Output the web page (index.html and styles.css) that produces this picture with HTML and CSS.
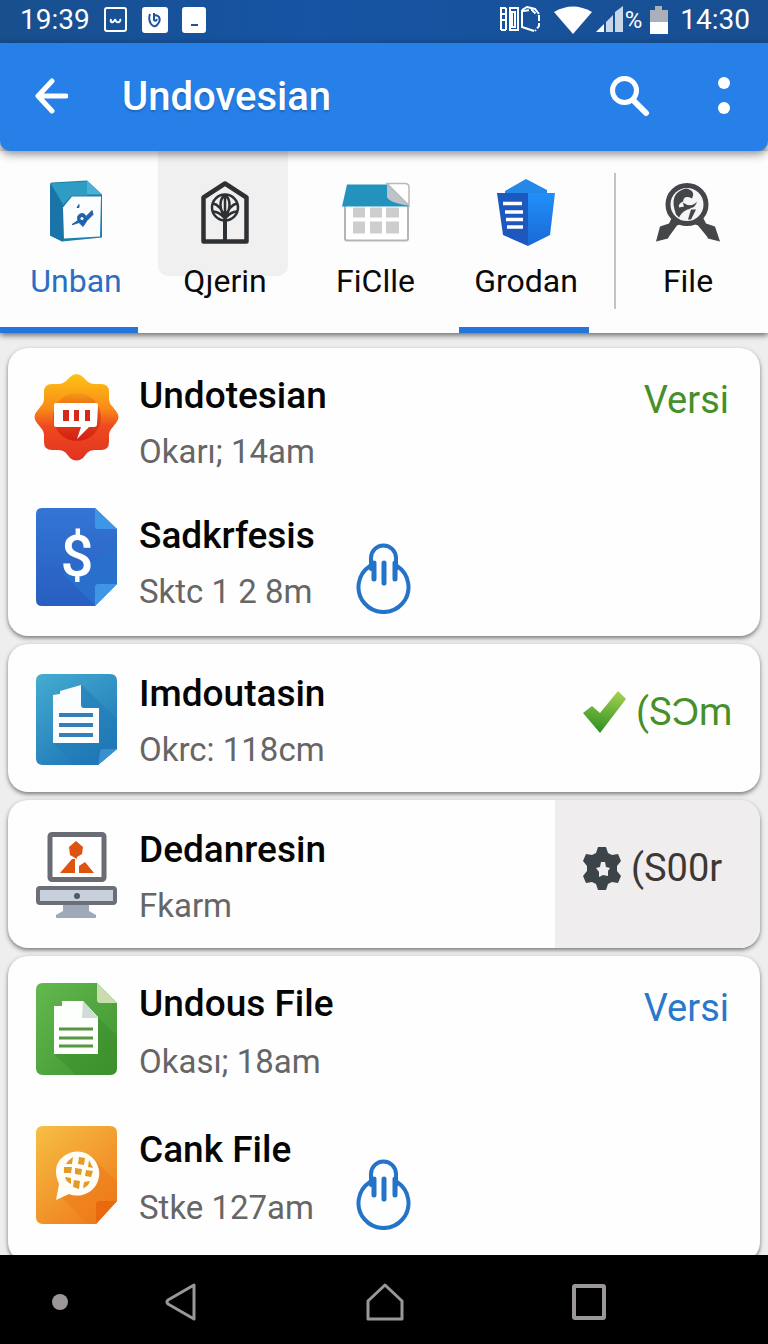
FILE: index.html
```html
<!DOCTYPE html>
<html lang="en"><head><meta charset="utf-8">
<meta name="viewport" content="width=device-width">
<title>Undovesian</title>
<link rel="stylesheet" href="styles.css">
</head><body>

<div class="statusbar">
	<span class="clock">19:39</span>
	<svg class="st-app" width="24" height="26" viewBox="0 0 24 26"><rect x="1" y="1" width="21" height="23" rx="2" fill="none" stroke="#fff" stroke-width="2"/><path d="M7 12q-1 4 2 3q2-1 2-3q1 4 4 3q2-1 1-3" fill="none" stroke="#fff" stroke-width="2"/></svg>
	<svg class="st-app" width="26" height="26" viewBox="0 0 26 26"><rect width="26" height="26" rx="3" fill="#fff"/><path d="M8 7q-2 5 1 10q3 4 6 1q4-4 2-8q-3-3-5-1M12 6v7q2 2 3-1" fill="none" stroke="#1a559c" stroke-width="2"/></svg>
	<svg class="st-app" width="24" height="26" viewBox="0 0 24 26"><rect width="24" height="26" rx="3" fill="#fff"/><path d="M9 18h7" stroke="#1a559c" stroke-width="2"/></svg>
	<span class="space"></span>
	<svg width="41" height="27" viewBox="0 0 41 27" fill="none" stroke="#fff" stroke-width="2"><path d="M1 1v23M6 2v22M1 2h5M1 8h5M1 14h5M1 24h5M10 2h8v22h-8zM12 6h3v15h-3zM22 4v17l12 4M22 4l5-3l8 2l4 5"/><path d="M23 5l9-1l5 5M39 9v11l-4 5" stroke-dasharray="6 2"/></svg>
	<svg class="wifi" width="38" height="28" viewBox="0 0 38 28"><path d="M0 6Q19-5 38 6L19 28z" fill="#fff"/></svg>
	<svg width="27" height="27" viewBox="0 0 27 27"><path d="M0 26l8-8v8z" fill="#fff"/><path d="M10 16l7-7v17h-7zM19 6l8-6v26h-8z" fill="#c8d6ea"/></svg>
	<span class="percent">%</span>
	<svg class="battery" width="18" height="28" viewBox="0 0 18 28"><path d="M0 4h5V0h7v4h6v12H0z" fill="#a9b0ba"/><path d="M0 16h18v12H0z" fill="#fff"/></svg>
	<span class="clock">14:30</span>
</div>

<header class="appbar">
	<button class="icon-btn" aria-label="Back"><svg width="33" height="36" viewBox="0 0 33 36"><path d="M17 3L3 18l14 15M4 18h27" fill="none" stroke="#fff" stroke-width="5" stroke-linecap="round" stroke-linejoin="round"/></svg></button>
	<h1>Undovesian</h1>
	<button class="icon-btn" aria-label="Search"><svg width="42" height="42" viewBox="0 0 42 42"><circle cx="15.500" cy="15.500" r="12" fill="none" stroke="#fff" stroke-width="5"/><path d="M24 25l13 13" stroke="#fff" stroke-width="6" stroke-linecap="round"/></svg></button>
	<button class="icon-btn more" aria-label="More"><svg width="12" height="38" viewBox="0 0 12 38" fill="#fff"><circle cx="6" cy="6" r="6"/><circle cx="6" cy="31" r="6"/></svg></button>
</header>

<nav class="tabs">
	<a class="tab active" href="#unban">
		<svg width="52" height="64" viewBox="0 0 52 64"><path d="M0 4q0-2 2-2L37 0l15 14v43l-40 4L0 55z" fill="#1d7fae"/><path d="M0 4l13 18v39L0 55z" fill="#1a74a8"/><path d="M1 3L37 1v14H24q-4 0-6 4l-5 5z" fill="#2f9cc4"/><path d="M37 0l15 14H37z" fill="#4bb0d4"/><path d="M13 27l9-11h29l-1 40-36 2z" fill="#fbfdff"/><path d="M22 44l6-4q-2-6 4-7q3 0 4 3l6-6 1 4-6 6-4 6-4-4-6 2zM27 27l2-3v3z" fill="#2163ab" stroke="#2163ab" stroke-width="1"/><circle cx="32" cy="38" r="1.500" fill="#fff"/></svg>
		<span>Unban</span>
	</a>
	<a class="tab pressed" href="#qerin">
		<svg width="48" height="64" viewBox="0 0 48 64" fill="none" stroke="#2e3134" stroke-width="4" stroke-linejoin="round"><path d="M2.500 61V17L24 3l21.500 14v44z" stroke-width="4.500"/><circle cx="24" cy="27" r="13" stroke-width="2.500"/><path d="M24 38v24" stroke-width="4"/><path d="M24 14q-9 8 0 24q9-16 0-24M24 14v24M12 23q7 1 12 14M36 23q-7 1-12 14M12 31q6 0 12 7M36 31q-6 0-12 7" stroke-width="2.500"/></svg>
		<span>Qȷerin</span>
	</a>
	<a class="tab" href="#ficlle">
		<svg width="68" height="60" viewBox="0 0 68 60"><path d="M3 20h63v36q0 2-2 2H5q-2 0-2-2z" fill="#fff" stroke="#b5b5b5" stroke-width="2"/><path d="M11 25h12v10H11zM28 25h12v10H28zM44 25h13v10H44zM11 39h12v12H11zM28 39h12v12H28zM44 39h13v12H44z" fill="#cdcdcd"/><path d="M5 2h40l22 22H0z" fill="#2393bd"/><path d="M45 1h18q4 0 4 4v18z" fill="#fff" stroke="#b9b9b9" stroke-width="1.500"/><path d="M45 2v12q1 6 21 9z" fill="#bfc3c9"/></svg>
		<span>FiClle</span>
	</a>
	<a class="tab active" href="#grodan">
		<svg width="58" height="67" viewBox="0 0 58 67"><defs><linearGradient id="gr" x2="0" y2="1"><stop stop-color="#2090f8"/><stop offset="1" stop-color="#1a68d6"/></linearGradient></defs><path d="M8 15v-3L29 0l21 11v4z" fill="#2488e8"/><path d="M0 14h31v53L6 56z" fill="#1c58bd"/><path d="M31 14h27l-5 42-22 11z" fill="url(#gr)"/><path d="M6 24.500h19M8 33h18M9 40.500h17M10 48h16" stroke="#fff" stroke-width="3.500"/></svg>
		<span>Grodan</span>
	</a>
	<span class="divider"></span>
	<a class="tab" href="#file">
		<svg width="64" height="62" viewBox="0 0 64 62"><path d="M17 34l9 8-5 2-8 11-1 2-12 3 4-15 9-3zM46 34l-9 8 5 2 9 11 1 2 12 3-5-15-9-3z" fill="#44464a"/><circle cx="31" cy="23" r="19" fill="#f5f5f5" stroke="#44464a" stroke-width="5"/><path d="M20 33q-8-22 10-26q10 2 6 10q-8-4-9 3q-5 2-4 6q6-2 12 1q-9 2-12 9zM27 21q8 6 14-1q-2 9-13 6zM35 28h5l-5 10h-3z" fill="#44464a"/></svg>
		<span>File</span>
	</a>
</nav>

<main class="list">

<section class="card">
	<div class="row">
		<div class="file-icon"><svg width="85" height="87" viewBox="0 0 85 87"><defs><linearGradient id="sun" gradientUnits="userSpaceOnUse" x1="42" y1="0" x2="42" y2="87"><stop stop-color="#fcc414"/><stop offset=".4" stop-color="#f98a18"/><stop offset=".6" stop-color="#ee4a20"/><stop offset="1" stop-color="#e23220"/></linearGradient><linearGradient id="disc" x2="0" y2="1"><stop stop-color="#f59a14"/><stop offset=".5" stop-color="#e4441a"/><stop offset="1" stop-color="#d31f14"/></linearGradient></defs><path d="M36 3q6.500-6 13 0l4 4q3 3 8 3h6q8 0 8 8v6q0 5 3 8l4 5q5 6 0 12l-4 5q-3 3-3 8v6q0 8-8 8h-6q-5 0-8 3l-4 5q-6.500 5-13 0l-4-5q-3-3-8-3h-6q-8 0-8-8v-6q0-5-3-8l-4-5q-5-6 0-12l4-5q3-3 3-8v-6q0-8 8-8h6q5 0 8-3z" fill="url(#sun)"/><circle cx="43" cy="43" r="24" fill="url(#disc)"/><path d="M22 29h40q2 0 2 2l-1 19q0 3-3 3h-5L43 65l4-12H22q-2 0-2-2V31q0-2 2-2z" fill="#fff"/><path d="M29 36h6v11h-6zM40 36h5v11h-5zM51 36h5v11h-5z" fill="#d5281b"/></svg></div>
		<div class="file-text"><h2>Undotesian</h2><p>Okarı; 14am</p></div>
		<span class="tag green">Versi</span>
	</div>
	<div class="row">
		<div class="file-icon"><svg width="81" height="98" viewBox="0 0 81 98"><defs><linearGradient id="bl" x2="0" y2="1"><stop stop-color="#3375d4"/><stop offset="1" stop-color="#285fc0"/></linearGradient></defs><path d="M6 0h53l22 21v55L59 98H6q-6 0-6-6V6q0-6 6-6z" fill="url(#bl)"/><path d="M27 66l32 31V76h22V40L55 54z" fill="#2870cc"/><path d="M59 0l22 21H62q-3 0-3-3zM81 76L59 98V79q0-3 3-3z" fill="#3f96e6"/><text x="41" y="68" text-anchor="middle" class="dollar">$</text></svg></div>
		<div class="file-text"><h2>Sadkrfesis</h2><p>Sktc 1 2 8m</p></div>
		<svg class="hand" width="55" height="71" viewBox="0 0 55 71" fill="none" stroke="#2373c8" stroke-width="4" stroke-linecap="round"><path d="M14 23a25 25 0 1 0 27 0M15 26V15a12.500 12.500 0 0 1 25 0v11"/><path d="M28 20v20M18 20v16M39 20v16" stroke-width="5"/></svg>
	</div>
</section>

<section class="card single">
	<div class="row">
		<div class="file-icon"><svg width="81" height="91" viewBox="0 0 81 91"><defs><linearGradient id="cy" x2=".6" y2="1"><stop stop-color="#45acd0"/><stop offset="1" stop-color="#1f79b8"/></linearGradient></defs><path d="M7 0h67q7 0 7 7v68L62 91H7q-7 0-7-7V7q0-7 7-7z" fill="url(#cy)"/><path d="M46 11l35 34v30L62 91H39L17 69z" fill="#2079b5" opacity=".5"/><path d="M81 75L62 91l2-13q0-3 4-3z" fill="#3a90cc"/><path d="M17 21l7-1v-3l21-6v20q0 3 3 3h15v35H17z" fill="#fbfdff"/><path d="M23 41h34M23 51h34M23 61h34" stroke="#347fb8" stroke-width="4"/></svg></div>
		<div class="file-text"><h2>Imdoutasin</h2><p>Okrc: 118cm</p></div>
	</div>
	<div class="action green">
		<svg width="43" height="42" viewBox="0 0 43 42"><defs><linearGradient id="ok" x1=".6" x2=".4" y2="1"><stop stop-color="#9fd04e"/><stop offset="1" stop-color="#2f8f22"/></linearGradient></defs><path d="M0 22l9-7 8 7L35 0l8 8-26 34z" fill="url(#ok)"/></svg>
		<span>(SƆm</span>
	</div>
</section>

<section class="card single">
	<div class="row">
		<div class="file-icon"><svg width="81" height="87" viewBox="0 0 81 87"><rect x="14" y="2.500" width="54" height="45" rx="2" fill="#fff" stroke="#696c74" stroke-width="5"/><path d="M40 9l7 6-1 7-5 3v2l-7-4-1-8zM24 41l12-14h3v14zM43 41v-7l6-4 9 11z" fill="#dd530f"/><rect x="2" y="56" width="77" height="15" rx="2" fill="#c7d0db" stroke="#6b6f78" stroke-width="4"/><circle cx="41" cy="64" r="3" fill="#4c5a6c"/><path d="M27 73h26v6l7 4v3H20v-3l7-4z" fill="#9eaaba"/></svg></div>
		<div class="file-text"><h2>Dedanresin</h2><p>Fkarm</p></div>
	</div>
	<button class="action shaded">
		<svg width="38" height="43" viewBox="0 0 38 43"><path fill-rule="evenodd" d="M15 0h8l2 6 4 2 6-1 3 7-4 5v5l4 5-3 7-6-1-4 2-2 6h-8l-2-6-4-2-6 1-3-7 4-5v-5l-4-5 3-7 6 1 4-2zM18 15l-1 5-4 1 3 4v5l4-2 5 1v-5l2-3-4-1-1-5z" fill="#3c444a"/></svg>
		<span>(S00r</span>
	</button>
</section>

<section class="card roomy">
	<div class="row">
		<div class="file-icon"><svg width="81" height="92" viewBox="0 0 81 92"><defs><linearGradient id="gn" x2="1" y2="1"><stop stop-color="#63b84e"/><stop offset="1" stop-color="#3f9430"/></linearGradient></defs><path d="M7 0h54l20 20v65q0 7-7 7H7q-7 0-7-7V7q0-7 7-7z" fill="url(#gn)"/><path d="M62 34l19 19v32q0 7-7 7H40L18 71z" fill="#378a29" opacity=".4"/><path d="M61 0l20 20H64q-3 0-3-3z" fill="#cbdcae"/><path d="M18 23h8v-5h21l15 16v37H18z" fill="#fdfffc"/><path d="M47 18l15 17H46z" fill="#cfdcd5"/><path d="M23 46h34M23 55h34M23 63h34" stroke="#57973f" stroke-width="3"/></svg></div>
		<div class="file-text"><h2>Undous File</h2><p>Okası; 18am</p></div>
		<span class="tag blue">Versi</span>
	</div>
	<div class="row">
		<div class="file-icon"><svg width="81" height="98" viewBox="0 0 81 98"><defs><linearGradient id="og" x2=".7" y2="1"><stop stop-color="#f6bf45"/><stop offset="1" stop-color="#ef7f1d"/></linearGradient></defs><path d="M7 0h67q7 0 7 7v68L60 98H7q-7 0-7-7V7q0-7 7-7z" fill="url(#og)"/><path d="M60 35l21 21v19L60 98H52L26 72z" fill="#ee7a17" opacity=".5"/><path d="M81 75L60 98V79q0-4 4-4z" fill="#e9690c"/><path d="M20 74l3-16q-8-18 5-28a22 22 0 1 1 5 38z" fill="#fffdf6"/><path d="M32 35l5-4-1 7h-6zM43 31l6 1-1 7-6-1zM53 34l4 8-5-1zM28 41h8l-1 6h-7zM39 42l7 1-1 6-6-1zM50 44l7 1-2 6-6-1zM29 51l6 1v6q-5-2-6-7zM38 54l6 1-1 8-6-2zM48 56l6-1q-2 6-7 7z" fill="#e29a28"/></svg></div>
		<div class="file-text"><h2>Cank File</h2><p>Stke 127am</p></div>
		<svg class="hand" width="55" height="71" viewBox="0 0 55 71" fill="none" stroke="#2373c8" stroke-width="4" stroke-linecap="round"><path d="M14 23a25 25 0 1 0 27 0M15 26V15a12.500 12.500 0 0 1 25 0v11"/><path d="M28 20v20M18 20v16M39 20v16" stroke-width="5"/></svg>
	</div>
</section>

</main>

<footer class="navbar">
	<span class="dot"></span>
	<button class="icon-btn" aria-label="Back"><svg width="32" height="40" viewBox="0 0 32 40"><path d="M29 3v34L3 22q-2-2 0-4z" fill="none" stroke="#9b9797" stroke-width="3" stroke-linejoin="round"/></svg></button>
	<button class="icon-btn" aria-label="Home"><svg width="38" height="40" viewBox="0 0 38 40"><path d="M2 37V19L19 3l17 16v18z" fill="none" stroke="#9b9797" stroke-width="3" stroke-linejoin="round"/></svg></button>
	<button class="icon-btn" aria-label="Recent"><svg width="34" height="36" viewBox="0 0 34 36"><rect x="2" y="2" width="30" height="32" rx="1" fill="none" stroke="#9b9797" stroke-width="4"/></svg></button>
</footer>

</body></html>
```

FILE: styles.css
```css
* {
	box-sizing: border-box;
}
body {
	margin: 0;
	height: 100vh;
	display: flex;
	flex-direction: column;
	overflow: hidden;
	font-family: Roboto, "Liberation Sans", sans-serif;
	background: #efeeef;
	color: #050505;
}
svg {
	display: block;
	flex: none;
}
h1, h2, p {
	margin: 0;
	white-space: nowrap;
}
button {
	font: inherit;
	color: inherit;
	border: none;
}
.icon-btn {
	padding: 0;
	background: none;
}

/* status bar */
.statusbar {
	flex: none;
	height: 43px;
	padding: 0 18px 4px 20px;
	display: flex;
	align-items: center;
	background: linear-gradient(90deg, #184f8d, #1654a4 40%, #184f90);
	color: #fff;
}
.clock {
	font-size: 28px;
}
.st-app {
	margin-left: 14px;
}
.space {
	flex: 1;
}
.wifi {
	margin: 0 4px 0 13px;
}
.percent {
	font-size: 24px;
	margin: 0 8px 0 2px;
}
.battery {
	margin-right: 12px;
}

/* app bar */
.appbar {
	flex: none;
	position: relative;
	z-index: 2;
	height: 108px;
	padding: 0 38px 2px 35px;
	display: flex;
	align-items: center;
	background: #2680e8;
	color: #fff;
	border-radius: 0 0 10px 10px;
	box-shadow: 0 3px 10px rgba(0,0,0,.45);
}
.appbar h1 {
	flex: 1;
	margin-left: 54px;
	font-size: 40px;
	font-weight: 500;
	text-shadow: 0 2px 2px rgba(0,0,0,.2);
}
.more {
	margin-left: 67px;
}

/* tabs */
.tabs {
	flex: none;
	position: relative;
	z-index: 1;
	height: 182px;
	padding-right: 28px;
	display: grid;
	grid-template-columns: 138fr 130fr 131fr 130fr 7px 104fr;
	column-gap: 20px;
	background: #fdfdfd;
	box-shadow: 0 2px 6px rgba(0,0,0,.6);
}
.tab {
	position: relative;
	padding: 28px 0 0 4px;
	display: flex;
	flex-direction: column;
	align-items: center;
	gap: 13px;
	border-bottom: 6px solid transparent;
	color: #0a0a0a;
	font-size: 32px;
	line-height: 44px;
	text-decoration: none;
}
.tab svg {
	height: 67px;
}
.tab svg, .tab span {
	position: relative;
}
.tab:first-child {
	padding-left: 14px;
	color: #2a6fc4;
}
.tab:last-child {
	padding-left: 0;
}
.tab.active {
	border-color: #2376dc;
}
.pressed::before {
	content: "";
	position: absolute;
	left: 0;
	right: 0;
	top: 0;
	height: 125px;
	background: #f1f0f1;
	border-radius: 0 0 10px 10px;
}
.divider {
	margin: 22px 0 24px 5px;
	background: #c4c4c4;
}

/* file list */
.list {
	flex: 1;
	min-height: 0;
	overflow: hidden;
	padding: 15px 8px 0;
	display: flex;
	flex-direction: column;
	gap: 8px;
}
.card {
	flex: none;
	display: grid;
	grid-template-columns: 1fr auto;
	row-gap: 40px;
	padding: 26px 0 22px;
	background: #fefefe;
	border-radius: 20px;
	box-shadow: 0 2px 4px rgba(0,0,0,.5);
	overflow: hidden;
}
.card.single {
	padding: 28px 0 20px;
}
.row {
	grid-column: 1;
	display: flex;
	padding: 0 31px 0 27px;
}
.file-icon {
	width: 83px;
	height: 86px;
	display: flex;
	align-items: center;
	justify-content: center;
}
.single .file-icon, .roomy .file-icon {
	height: 94px;
}
.file-text {
	min-width: 217px;
	margin-left: 21px;
	display: flex;
	flex-direction: column;
	gap: 12px;
	line-height: 44px;
}
.file-text h2 {
	font-size: 37px;
	font-weight: 500;
}
.file-text p {
	font-size: 33px;
	color: #666;
}
.dollar {
	font-size: 58px;
	font-weight: 500;
	fill: #fff;
}
.tag {
	margin: 4px 0 0 auto;
	font-size: 38px;
	line-height: 44px;
}
.hand {
	align-self: flex-end;
}
.action {
	grid-column: 2;
	width: 205px;
	margin: -28px 0 -20px;
	padding: 0 0 12px 28px;
	display: flex;
	align-items: center;
	gap: 10px;
	font-size: 38px;
	white-space: nowrap;
}
.shaded {
	background: #efedee;
	color: #3d3833;
}
.green {
	color: #46902a;
}
.blue {
	color: #2a78cc;
}
/* last card runs on under the system keys */
.roomy {
	row-gap: 44px;
	padding-bottom: 32px;
}
.roomy .file-text {
	gap: 14px;
}

/* system keys */
.navbar {
	flex: none;
	position: relative;
	z-index: 1;
	height: 89px;
	padding-top: 4px;
	display: grid;
	grid-template-columns: 79fr 204fr 204fr 204fr 77fr;
	align-items: center;
	justify-items: center;
	background: #000;
}
.dot {
	width: 16px;
	height: 16px;
	margin-right: 11px;
	justify-self: end;
	border-radius: 50%;
	background: #9b9797;
}
```
